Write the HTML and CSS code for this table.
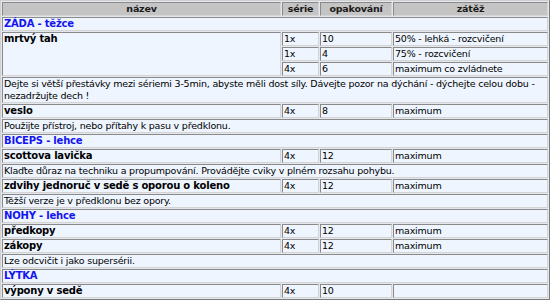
FILE: index.html
```html
<!DOCTYPE html>
<html lang="cs">
<head>
<meta charset="utf-8">
<title>Trénink</title>
<link rel="stylesheet" href="styles.css">
</head>
<body>
<table class="plan">
  <colgroup>
    <col class="c-name">
    <col class="c-sets">
    <col class="c-reps">
    <col class="c-load">
  </colgroup>
  <thead>
    <tr><th>název</th><th>série</th><th>opakování</th><th>zátěž</th></tr>
  </thead>
  <tbody>
    <tr class="section"><td colspan="4">ZÁDA - těžce</td></tr>
    <tr><td class="ex top" rowspan="3">mrtvý tah</td><td>1x</td><td>10</td><td>50% - lehká - rozcvičení</td></tr>
    <tr><td>1x</td><td>4</td><td>75% - rozcvičení</td></tr>
    <tr><td>4x</td><td>6</td><td>maximum co zvládnete</td></tr>
    <tr><td colspan="4">Dejte si větší přestávky mezi sériemi 3-5min, abyste měli dost síly. Dávejte pozor na dýchání - dýchejte celou dobu - nezadržujte dech !</td></tr>
    <tr><td class="ex">veslo</td><td>4x</td><td>8</td><td>maximum</td></tr>
    <tr><td colspan="4">Použijte přístroj, nebo přítahy k pasu v předklonu.</td></tr>
    <tr class="section"><td colspan="4">BICEPS - lehce</td></tr>
    <tr><td class="ex">scottova lavička</td><td>4x</td><td>12</td><td>maximum</td></tr>
    <tr><td colspan="4">Klaďte důraz na techniku a propumpování. Provádějte cviky v plném rozsahu pohybu.</td></tr>
    <tr><td class="ex">zdvihy jednoruč v sedě s oporou o koleno</td><td>4x</td><td>12</td><td>maximum</td></tr>
    <tr><td colspan="4">Těžší verze je v předklonu bez opory.</td></tr>
    <tr class="section"><td colspan="4">NOHY - lehce</td></tr>
    <tr><td class="ex">předkopy</td><td>4x</td><td>12</td><td>maximum</td></tr>
    <tr><td class="ex">zákopy</td><td>4x</td><td>12</td><td>maximum</td></tr>
    <tr><td colspan="4">Lze odcvičit i jako supersérii.</td></tr>
    <tr class="section"><td colspan="4">LÝTKA</td></tr>
    <tr><td class="ex">výpony v sedě</td><td>4x</td><td>10</td><td></td></tr>
  </tbody>
</table>
</body>
</html>
```
FILE: styles.css
```css
html, body {
  margin: 0;
  padding: 0;
  background: #ffffff;
}

.plan {
  width: 550px;
  table-layout: fixed;
  border-collapse: separate;
  border-spacing: 1px;
  border: 1px solid;
  border-color: #d0d0d0 #7a7a7a #7a7a7a #d0d0d0;
  background: #e4e8ee;
  font-family: "DejaVu Sans", Verdana, sans-serif;
  font-size: 9.5px;
  letter-spacing: -0.2px;
  line-height: 12px;
  color: #000;
}

.c-name { width: 279px; }
.c-sets { width: 37px; }
.c-reps { width: 72px; }
.c-load { width: 155px; }

.plan th,
.plan td {
  border: 1px solid;
  border-color: #8a8a8a #d4d4d4 #d4d4d4 #8a8a8a;
  padding: 0 1px;
  background: #eef5ff;
  text-align: left;
  vertical-align: middle;
}

.plan th {
  background: #c4c4c4;
  text-align: center;
  font-weight: bold;
  color: #1a1a1a;
}

.plan .ex {
  font-weight: bold;
  font-size: 10px;
}

.plan .top {
  vertical-align: top;
}

.plan .section td {
  color: #1414f0;
  font-weight: bold;
  font-size: 10px;
}
```
